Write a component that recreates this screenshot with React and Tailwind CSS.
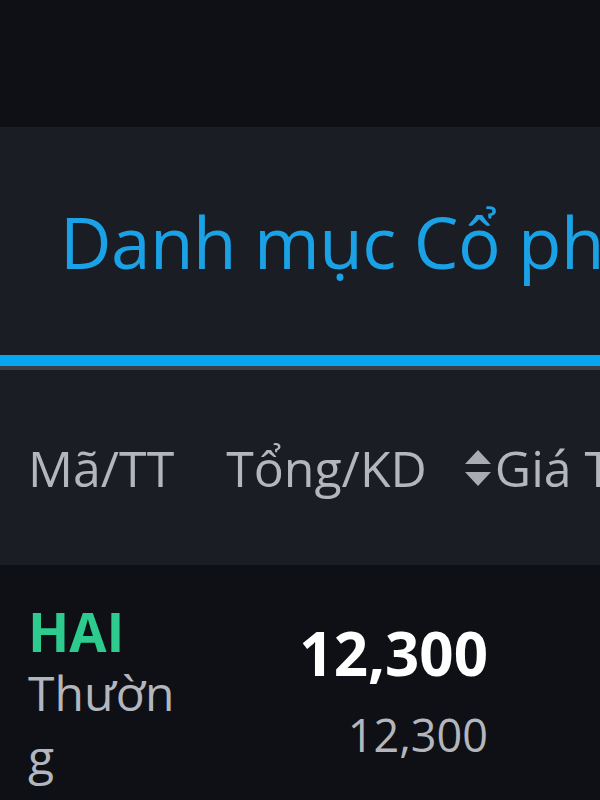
const App = () => {
    return (
        <div className="w-[600px] h-[800px] overflow-hidden bg-[#0e1015] text-[#b3b6bd]" style={{ fontFamily: '"Open Sans", "Noto Sans", sans-serif' }}>

            {/* top bar */}
            <div className="h-[127px] bg-[#0e1015]" />

            {/* title panel */}
            <div className="h-[228px] bg-[#1a1d23] flex items-center pl-[60px] whitespace-nowrap overflow-hidden">
                <h1 className="text-[71px] leading-none text-[#1ba2e6] tracking-[-0.5px]">Danh mục Cổ phiếu</h1>
            </div>
            <div className="h-[11px] bg-[#08a6f0]" />
            <div className="h-[4px] bg-[#3a3f47]" />

            {/* table header */}
            <div className="h-[195px] bg-[#1a1d23] flex items-center pl-[28px] whitespace-nowrap overflow-hidden text-[50px] leading-none">
                <span>Mã/TT</span>
                <span className="ml-[52px]">Tổng/KD</span>
                <span className="ml-[36px] flex items-center">
                    <svg width="30" height="40" viewBox="0 0 30 40" className="mr-[2px]">
                        <path d="M15 2 L28 16 H2 Z" fill="#a9acb3" />
                        <path d="M15 38 L28 24 H2 Z" fill="#a9acb3" />
                    </svg>
                    Giá TT
                </span>
            </div>

            {/* row */}
            <div className="bg-[#0e1015] flex pl-[28px] pt-[38px]">
                <div className="w-[160px] break-all">
                    <div className="text-[54px] font-bold leading-[56px] text-[#2dcc8e]">HAI</div>
                    <div className="text-[48px] leading-[64px] pt-[2px] text-[#b3b6bd]">Thường</div>
                </div>
                <div className="w-[300px] flex flex-col items-end pt-[16px]">
                    <div className="text-[60px] font-bold leading-[68px] text-white">12,300</div>
                    <div className="text-[45px] leading-[64px] pt-[16px] text-[#b3b6bd]">12,300</div>
                </div>
            </div>
        </div>
    );
};

export default App;
